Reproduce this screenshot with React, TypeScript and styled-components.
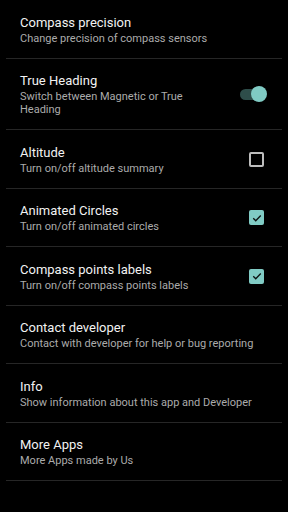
import React from "react";
import styled, { createGlobalStyle } from "styled-components";

const GlobalStyle = createGlobalStyle`
  html, body {
    margin: 0;
    padding: 0;
    background: #000;
  }
  body {
    font-family: Roboto, "Noto Sans", sans-serif;
    -webkit-font-smoothing: antialiased;
  }
`;

type Control = "none" | "switch" | "checkbox";

interface Setting {
  title: string;
  summary: string;
  control: Control;
  checked?: boolean;
}

const settings: Setting[] = [
  { title: "Compass precision", summary: "Change precision of compass sensors", control: "none" },
  { title: "True Heading", summary: "Switch between Magnetic or True Heading", control: "switch", checked: true },
  { title: "Altitude", summary: "Turn on/off altitude summary", control: "checkbox", checked: false },
  { title: "Animated Circles", summary: "Turn on/off animated circles", control: "checkbox", checked: true },
  { title: "Compass points labels", summary: "Turn on/off compass points labels", control: "checkbox", checked: true },
  { title: "Contact developer", summary: "Contact with developer for help or bug reporting", control: "none" },
  { title: "Info", summary: "Show information about this app and Developer", control: "none" },
  { title: "More Apps", summary: "More Apps made by Us", control: "none" },
];

export default function App() {
  return (
    <>
      <GlobalStyle />
      <Screen>
        {settings.map((s) => (
          <Row key={s.title}>
            <Texts>
              <Title>{s.title}</Title>
              <Summary $narrow={s.control === "switch"}>{s.summary}</Summary>
            </Texts>
            {s.control === "switch" && (
              <Switch>
                <Track />
                <Thumb />
              </Switch>
            )}
            {s.control === "checkbox" && (
              <CheckBox $checked={!!s.checked}>
                {s.checked && (
                  <svg width="12" height="12" viewBox="0 0 24 24">
                    <path d="M4.5 12.5l5 5L19.5 7" fill="none" stroke="#0b1211" strokeWidth="2.6" />
                  </svg>
                )}
              </CheckBox>
            )}
          </Row>
        ))}
      </Screen>
    </>
  );
}

const Screen = styled.div`
  width: 288px;
  height: 512px;
  background: #000;
  display: flex;
  flex-direction: column;
  padding: 0 6px;
  box-sizing: border-box;
`;

const Row = styled.div`
  display: flex;
  align-items: center;
  padding: 13.5px 16px 13px 14px;
  border-bottom: 1px solid #262626;
`;

const Texts = styled.div`
  flex: 1;
  display: flex;
  flex-direction: column;
  min-width: 0;
`;

const Title = styled.div`
  color: #f2f2f2;
  font-size: 13px;
  line-height: 17px;
`;

const Summary = styled.div<{ $narrow: boolean }>`
  color: #ababab;
  font-size: 11px;
  line-height: 13px;
  margin-top: 1px;
  max-width: ${(p) => (p.$narrow ? "185px" : "none")};
`;

const Switch = styled.div`
  position: relative;
  width: 27px;
  height: 16px;
  flex-shrink: 0;
  margin-right: -1px;
`;

const Track = styled.div`
  position: absolute;
  left: 0;
  top: 3px;
  width: 25px;
  height: 11px;
  border-radius: 6px;
  background: #2e4d4a;
`;

const Thumb = styled.div`
  position: absolute;
  right: 0;
  top: 0;
  width: 16px;
  height: 16px;
  border-radius: 50%;
  background: #80cbc4;
`;

const CheckBox = styled.div<{ $checked: boolean }>`
  width: 15px;
  height: 15px;
  box-sizing: border-box;
  border-radius: 2px;
  flex-shrink: 0;
  margin-right: 2px;
  display: flex;
  align-items: center;
  justify-content: center;
  background: ${(p) => (p.$checked ? "#80cbc4" : "transparent")};
  border: ${(p) => (p.$checked ? "none" : "2px solid #bdbdbd")};
`;
